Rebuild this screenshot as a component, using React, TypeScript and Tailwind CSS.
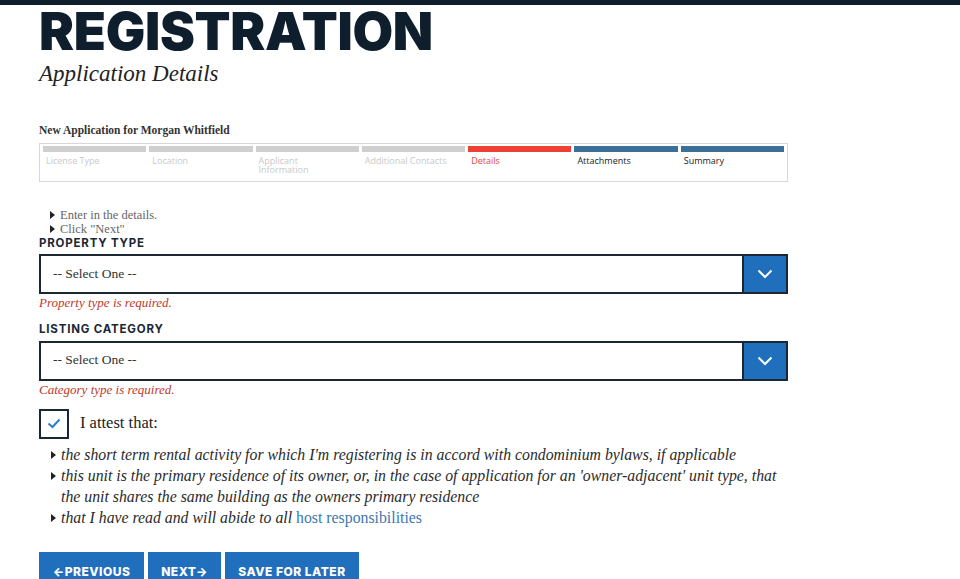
import React, { useState } from "react";

const serif = "font-['Liberation_Serif',serif]";
const sans = "font-['Inter','Liberation_Sans',sans-serif]";
const opensans = "font-['Open_Sans','Liberation_Sans',sans-serif]";

const steps = [
  { label: "License Type", state: "done" },
  { label: "Location", state: "done" },
  { label: "Applicant\nInformation", state: "done" },
  { label: "Additional Contacts", state: "done" },
  { label: "Details", state: "current" },
  { label: "Attachments", state: "todo" },
  { label: "Summary", state: "todo" },
];

const Bullet = ({ top = "mt-[5px]" }: { top?: string }) => (
  <svg width="5" height="8" viewBox="0 0 5 8" className={`${top} shrink-0`}>
    <path d="M0 0 L5 4 L0 8 Z" fill="#222" />
  </svg>
);

const Chevron = () => (
  <svg width="16" height="10" viewBox="0 0 16 10" fill="none">
    <path d="M1.5 1.5 L8 8 L14.5 1.5" stroke="white" strokeWidth="2" />
  </svg>
);

const SelectBox = () => (
  <div className="flex h-[40px] items-stretch border-2 border-[#1b2733] bg-white">
    <div className={`flex flex-1 items-center pl-[12px] text-[13.5px] text-[#333] ${serif}`}>-- Select One --</div>
    <div className="flex w-[44px] items-center justify-center border-l-2 border-[#1b2733] bg-[#1f6fbc]">
      <Chevron />
    </div>
  </div>
);

export default function App() {
  const [checked, setChecked] = useState(true);

  return (
    <div className="min-h-[579px] w-[960px] overflow-hidden bg-white">
      <div className="h-[5px] bg-[#0f1e2c]" />
      <div className="ml-[39px] w-[749px]">
        <h1 className={`mt-[1px] text-[52.5px] font-black leading-[50px] tracking-[-0.3px] text-[#0f1e2c] ${sans}`}>
          REGISTRATION
        </h1>
        <h2 className={`mt-[3px] text-[23px] italic leading-[30px] text-[#222] ${serif}`}>Application Details</h2>

        <p className={`mt-[33px] text-[11.5px] font-bold leading-[17px] text-[#333] ${serif}`}>New Application for Morgan Whitfield</p>

        <div className="mt-[4px] grid h-[39px] grid-cols-7 gap-[3px] border border-[#d8d8d8] px-[3px] pt-[2px]">
          {steps.map((s) => (
            <div key={s.label}>
              <div
                className={
                  s.state === "done"
                    ? "h-[6px] bg-[#cfcfcf]"
                    : s.state === "current"
                    ? "h-[6px] bg-[#ee4136]"
                    : "h-[6px] bg-[#3c6f97]"
                }
              />
              <div
                className={`mt-[4px] whitespace-pre pl-[3px] text-[9px] leading-[9px] ${opensans} ${
                  s.state === "done" ? "text-[#c9c9c9]" : s.state === "current" ? "text-[#e0463d]" : "text-[#222]"
                }`}
              >
                {s.label}
              </div>
            </div>
          ))}
        </div>

        <ul className={`mt-[26px] pl-[11px] text-[12.5px] leading-[14px] text-[#666] ${serif}`}>
          <li className="flex gap-[5px]">
            <Bullet top="mt-[3px]" />
            Enter in the details.
          </li>
          <li className="flex gap-[5px]">
            <Bullet top="mt-[3px]" />
            Click "Next"
          </li>
        </ul>

        <label className={`-mt-[1px] block text-[11.5px] font-bold tracking-[0.8px] text-[#1b2733] ${sans}`}>PROPERTY TYPE</label>
        <div className="mt-[2px]">
          <SelectBox />
        </div>
        <p className={`mt-[1px] text-[13px] italic leading-[16px] text-[#c0392b] ${serif}`}>Property type is required.</p>

        <label className={`mt-[10px] block text-[11.5px] font-bold tracking-[0.8px] text-[#1b2733] ${sans}`}>LISTING CATEGORY</label>
        <div className="mt-[2px]">
          <SelectBox />
        </div>
        <p className={`mt-[1px] text-[13px] italic leading-[16px] text-[#c0392b] ${serif}`}>Category type is required.</p>

        <div className="mt-[11px] flex items-center gap-[11px]">
          <button
            onClick={() => setChecked(!checked)}
            className="flex h-[30px] w-[30px] items-center justify-center border-2 border-[#1b2733] bg-white"
          >
            {checked && (
              <svg width="14" height="11" viewBox="0 0 14 11" fill="none">
                <path d="M1.5 5.5 L5.5 9 L12.5 1.5" stroke="#2a7fcf" strokeWidth="2" />
              </svg>
            )}
          </button>
          <span className={`text-[16.5px] text-[#222] ${serif}`}>I attest that:</span>
        </div>

        <ul className={`mt-[5px] pl-[12px] text-[15.8px] italic leading-[21px] text-[#2a2a2a] ${serif}`}>
          <li className="flex gap-[5px]">
            <Bullet top="mt-[7px]" />
            <span>the short term rental activity for which I'm registering is in accord with condominium bylaws, if applicable</span>
          </li>
          <li className="flex gap-[5px]">
            <Bullet top="mt-[7px]" />
            <span>
              this unit is the primary residence of its owner, or, in the case of application for an 'owner-adjacent' unit type, that the unit
              shares the same building as the owners primary residence
            </span>
          </li>
          <li className="flex gap-[5px]">
            <Bullet top="mt-[7px]" />
            <span>
              that I have read and will abide to all{" "}
              <a href="#" className="not-italic text-[#3b78b0]">
                host responsibilities
              </a>
            </span>
          </li>
        </ul>

        <div className={`mt-[24px] flex gap-[4px] text-[12px] font-extrabold tracking-[0.5px] text-white ${sans}`}>
          <button className="flex h-[36px] w-[105px] items-start justify-center bg-[#1f6fbc] pt-[13px] leading-[14px]">←PREVIOUS</button>
          <button className="flex h-[36px] w-[73px] items-start justify-center bg-[#1f6fbc] pt-[13px] leading-[14px]">NEXT→</button>
          <button className="flex h-[36px] w-[134px] items-start justify-center bg-[#1f6fbc] pt-[13px] leading-[14px]">SAVE FOR LATER</button>
        </div>
      </div>
    </div>
  );
}
